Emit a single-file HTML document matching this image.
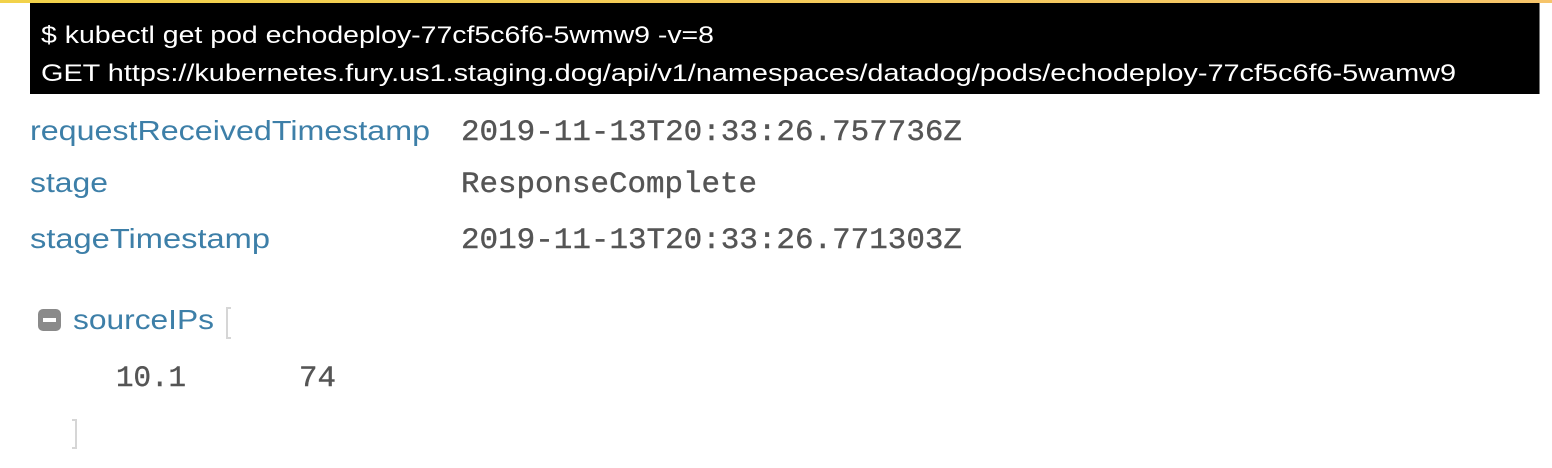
<!DOCTYPE html>
<html><head><meta charset="utf-8"><style>
html,body{margin:0;padding:0;background:#fff;width:1552px;height:468px;overflow:hidden}
</style></head><body>
<svg width="1552" height="468" viewBox="0 0 1552 468" xmlns="http://www.w3.org/2000/svg">
<defs><linearGradient id="y" x1="0" x2="1"><stop offset="0" stop-color="#f2d24a"/><stop offset="1" stop-color="#f6c46a"/></linearGradient></defs>
<rect x="0" y="0" width="1552" height="3" fill="url(#y)"/>
<rect x="30" y="3" width="1510" height="91" fill="#000"/>
<rect x="1539" y="3" width="1" height="91" fill="#777"/>
<g font-family="Liberation Sans, sans-serif" fill="#fff" font-size="24">
<text x="41" y="43" textLength="673" lengthAdjust="spacingAndGlyphs">$ kubectl get pod echodeploy-77cf5c6f6-5wmw9 -v=8</text>
<text x="41" y="81" textLength="1415" lengthAdjust="spacingAndGlyphs">GET https://kubernetes.fury.us1.staging.dog/api/v1/namespaces/datadog/pods/echodeploy-77cf5c6f6-5wamw9</text>
</g>
<g font-family="Liberation Sans, sans-serif" fill="#3d7fa8" font-size="28">
<text x="30" y="140" textLength="400" lengthAdjust="spacingAndGlyphs">requestReceivedTimestamp</text>
<text x="30" y="192" textLength="78" lengthAdjust="spacingAndGlyphs">stage</text>
<text x="30" y="248" textLength="240" lengthAdjust="spacingAndGlyphs">stageTimestamp</text>
<text x="73" y="329" textLength="141" lengthAdjust="spacingAndGlyphs">sourceIPs</text>
</g>
<g font-family="Liberation Mono, monospace" fill="#555" font-size="30" stroke="#555" stroke-width="0.4">
<text x="461" y="140" textLength="501" lengthAdjust="spacingAndGlyphs">2019-11-13T20:33:26.757736Z</text>
<text x="461" y="192" textLength="296" lengthAdjust="spacingAndGlyphs">ResponseComplete</text>
<text x="461" y="248" textLength="501" lengthAdjust="spacingAndGlyphs">2019-11-13T20:33:26.771303Z</text>
<text x="116" y="386" textLength="70" lengthAdjust="spacingAndGlyphs">10.1</text>
<text x="299" y="386" textLength="37" lengthAdjust="spacingAndGlyphs">74</text>
</g>
<rect x="38" y="309" width="23" height="22" rx="5" fill="#8a8a8a"/>
<rect x="43" y="318" width="13" height="4" fill="#fff"/>
<path d="M231 308 h-4 v30 h4" stroke="#d6d6d6" stroke-width="2" fill="none"/>
<path d="M72 420 h4 v28 h-4" stroke="#d6d6d6" stroke-width="2" fill="none"/>
</svg>
</body></html>
